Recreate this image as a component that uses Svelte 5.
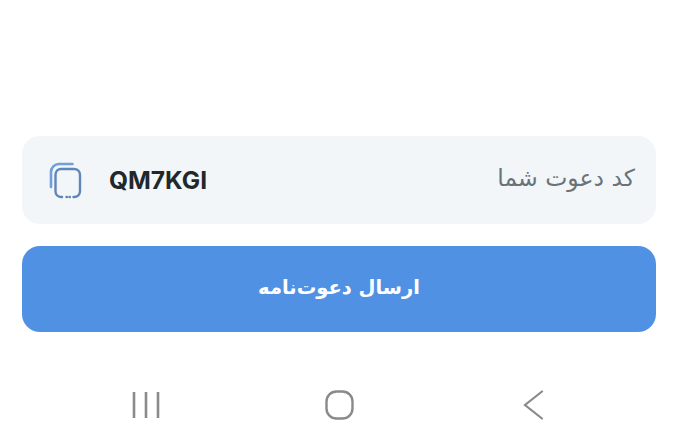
<script lang="ts">
  const code = 'QM7KGI';
</script>

<div class="screen">
  <div class="invite">
    <div class="code-card">
      <div class="code-left">
        <svg class="copy-icon" viewBox="0 0 34 38" width="34" height="38" fill="none" stroke-linecap="round" aria-hidden="true">
          <path d="M23.500 3H10C5.500 3 2 6.500 2 11v15" stroke="#6f9fdc" stroke-width="2.6" />
          <path d="M13 36H12C8.500 36 6.500 33.500 6.500 30V14C6.500 10 9 8 12 8H25C28.500 8 31 10.500 31 14V30C31 33.500 28.500 36 25 36H24.500" stroke="#5f86b8" stroke-width="2.4" />
          <path d="M17.500 36h.4M20.500 36h.4" stroke="#5f86b8" stroke-width="2.400" />
        </svg>
        <span class="code">{code}</span>
      </div>
      <span class="label" dir="rtl">کد دعوت شما</span>
    </div>
    <button class="send" dir="rtl">ارسال دعوت‌نامه</button>
  </div>

  <nav class="navbar">
    <svg viewBox="0 0 30 30" width="30" height="30" fill="none" stroke="#8a8a8a" stroke-width="2.600" aria-hidden="true">
      <path d="M3 2v26M15 2v26M27 2v26" />
    </svg>
    <svg viewBox="0 0 30 30" width="30" height="30" fill="none" stroke="#8a8a8a" stroke-width="2.400" aria-hidden="true">
      <rect x="1.500" y="1.500" width="26" height="27" rx="10" />
    </svg>
    <svg viewBox="0 0 30 30" width="30" height="30" fill="none" stroke="#8a8a8a" stroke-width="2.200" stroke-linecap="round" aria-hidden="true">
      <path d="M24 1.500L7 15l17 13.500" />
    </svg>
  </nav>
</div>

<style>
  :global(body) {
    margin: 0;
    background: #fff;
  }

  .screen {
    width: 684px;
    height: 445px;
    padding-top: 136px;
    box-sizing: border-box;
    overflow: hidden;
    background: #fff;
  }

  .invite {
    display: flex;
    flex-direction: column;
    gap: 22px;
    padding: 0 28px 0 22px;
  }

  .code-card {
    display: flex;
    align-items: center;
    justify-content: space-between;
    height: 88px;
    padding: 0 21px 0 27px;
    background: #f2f6f9;
    border-radius: 18px;
  }

  .code-left {
    display: flex;
    align-items: center;
    gap: 26px;
  }

  .copy-icon {
    display: block;
  }

  .code {
    font-family: Inter, "Liberation Sans", sans-serif;
    font-size: 24.500px;
    font-weight: 700;
    color: #21282c;
    letter-spacing: 0;
  }

  .label {
    font-family: "DejaVu Sans", sans-serif;
    font-size: 23.500px;
    color: #6a7377;
    margin-top: -4px;
  }

  .send {
    display: block;
    width: 100%;
    height: 86px;
    border: none;
    border-radius: 18px;
    background: #5191e4;
    color: #fff;
    font-family: "DejaVu Sans", sans-serif;
    font-size: 19.500px;
    font-weight: 700;
    padding: 0 0 4px;
  }

  .navbar {
    display: flex;
    justify-content: space-between;
    align-items: center;
    margin-top: 58px;
    padding: 0 136px 0 131px;
  }
</style>
